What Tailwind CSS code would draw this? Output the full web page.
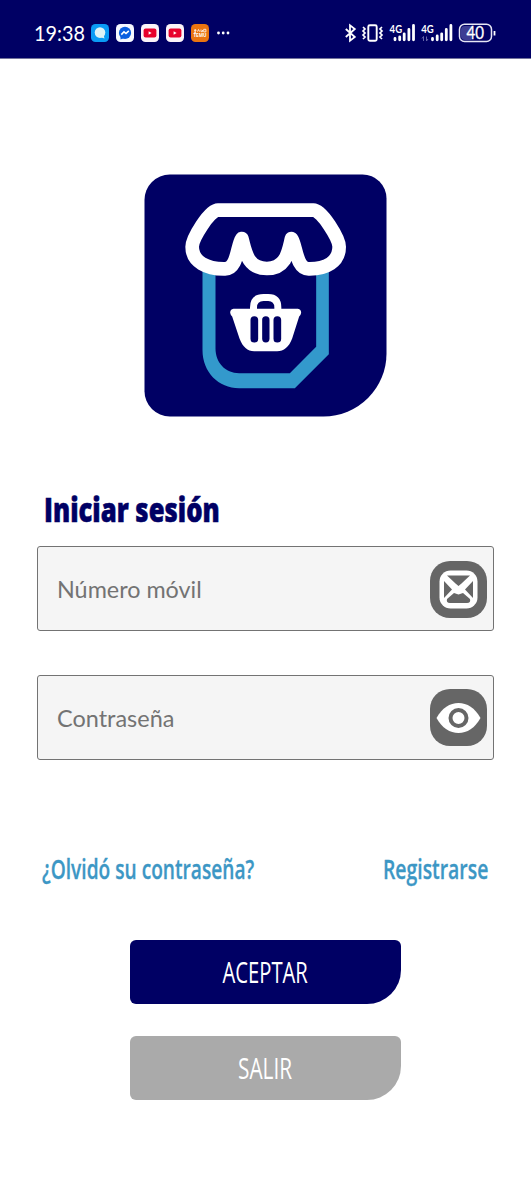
<!DOCTYPE html>
<html lang="es">
<head>
  <meta charset="UTF-8" />
  <meta name="viewport" content="width=device-width, initial-scale=1.0" />
  <title>Iniciar sesión</title>
  <script src="https://cdn.jsdelivr.net/npm/@tailwindcss/browser@4"></script>
</head>
<body class="min-h-[1200px] bg-white font-['Open_Sans',sans-serif] overflow-x-hidden">
  <!-- Status bar -->
  <header class="h-[58px] bg-[#000064] text-white flex items-center justify-between pl-[34px] pr-[35px] pt-2">
    <div class="flex items-center">
      <span class="w-[57px] font-['Lato',sans-serif] text-[22px] leading-none whitespace-nowrap"><span class="inline-block origin-left scale-x-[0.9]">19:38</span></span>
      <div class="flex items-center gap-[7px]">
        <svg class="w-[18px] h-[18px]" viewBox="0 0 18 18">
          <rect width="18" height="18" rx="4.5" fill="#0a9bf5" />
          <circle cx="9" cy="8.6" r="5.3" fill="#dff3f6" />
          <path d="M9 13l4.500 1.500-1-4z" fill="#dff3f6" />
        </svg>
        <svg class="w-[18px] h-[18px]" viewBox="0 0 18 18">
          <rect width="18" height="18" rx="4.5" fill="#f6f8ff" />
          <circle cx="9" cy="8.9" r="6.1" fill="#0b5fe0" />
          <path d="M4.5 12v3.4l3.5-1.5z" fill="#0b5fe0" />
          <path d="M5.3 10.6L8 7.8l2 1.7 2.8-2.6" fill="none" stroke="#fff" stroke-width="1.6" />
        </svg>
        <svg class="w-[18px] h-[18px]" viewBox="0 0 18 18">
          <rect width="18" height="18" rx="4.5" fill="#fbf3f8" />
          <rect x="2.6" y="4.5" width="12.8" height="9" rx="2" fill="#e8002c" />
          <path d="M7.6 7.2v3.6l3-1.8z" fill="#fff" />
        </svg>
        <svg class="w-[18px] h-[18px]" viewBox="0 0 18 18">
          <rect width="18" height="18" rx="4.5" fill="#fbf3f8" />
          <rect x="2.6" y="4.5" width="12.8" height="9" rx="2" fill="#e8002c" />
          <path d="M7.6 7.2v3.6l3-1.8z" fill="#fff" />
        </svg>
        <svg class="w-[18px] h-[18px]" viewBox="0 0 18 18">
          <rect width="18" height="18" rx="4.5" fill="#ea7410" />
          <path d="M3 6.3h2.5M4.2 5v3.5M6.5 7.7l1-2.2 1.2 2.2M10 5.5v2.2h1.5V6M12.7 5.3h2.2v2.6h-2.2zM3 8.3h2" fill="none" stroke="#fff" stroke-width=".8" />
          <text x="2.4" y="13.4" textLength="13.2" lengthAdjust="spacingAndGlyphs" font-size="5.2" font-weight="700" fill="#fff">TEMU</text>
        </svg>
        <svg class="w-[14px] h-[18px]" viewBox="0 0 14 18" fill="#fff">
          <circle cx="2.5" cy="9" r="1.4" /><circle cx="7.2" cy="9" r="1.4" /><circle cx="12" cy="9" r="1.4" />
        </svg>
      </div>
    </div>

    <!-- Bluetooth, vibration, two SIM signals, battery -->
    <svg class="w-[152px] h-[30px]" viewBox="344 18 152 30" fill="none" stroke="#fff">
      <path d="M345.800 29l9 8-4.800 3.700V25.300l4.800 3.700-9 8" stroke-width="1.800" />
      <rect x="368.300" y="25.200" width="8.400" height="15.600" rx="1.500" stroke-width="1.900" />
      <path d="M363 27l2 2-2 2 2 2-2 2 2 2-2 2M382 27l-2 2 2 2-2 2 2 2-2 2 2 2" stroke-width="1.700" />
      <g stroke-width="2.800" stroke-linecap="round">
        <path d="M395 38.500v1.300M399.700 37v2.800M404.200 33.800v6M408.900 29.500v10.300M413.500 25.500v14.300" />
        <path d="M432.500 38.500v1.300M437.200 36v3.800M441.700 33.800v6M446.300 29.500v10.300M450.900 25.500v14.300" />
      </g>
      <path d="M423.500 36.500v4.500M426.500 36.500v4.500M422 38.500l1.500-2M428 39l-1.500 2" stroke="#6666a8" stroke-width="1" />
      <rect x="459.500" y="24.200" width="32" height="17.300" rx="5" stroke-width="1.500" stroke="#e6e6f5" />
      <path d="M471.500 26H465q-4 0-4 4v6q0 4 4 4h6.500z" fill="#3d3d94" stroke="none" />
      <path d="M494.500 31v4.500" stroke-width="1.800" />
      <g fill="#fff" stroke="none" font-family="Lato, sans-serif">
        <text x="389.600" y="33.300" textLength="12.500" lengthAdjust="spacingAndGlyphs" font-size="12" font-weight="700">4G</text>
        <text x="421.300" y="33.300" textLength="12.500" lengthAdjust="spacingAndGlyphs" font-size="12" font-weight="700">4G</text>
        <text x="466.500" y="38.900" textLength="17.500" lengthAdjust="spacingAndGlyphs" font-size="16.500" font-weight="400" stroke="#fff" stroke-width=".3">40</text>
      </g>
    </svg>
  </header>

  <main class="flex flex-col border-t border-[#73739c] px-[37px]">
    <!-- Logo -->
    <svg class="mt-[115px] ml-[107px] w-[243px] h-[243px]" viewBox="26.500 26.500 729 729">
      <path d="M104 28H682A72 72 0 0 1 754 100V565A189 189 0 0 1 565 754H104A76 76 0 0 1 28 678V104A76 76 0 0 1 104 28Z" fill="#000064" />
      <path d="M202 305V555C202 620 250 669 312 669H479L581 567V305H543V545L464 624H312C270 624 241 592 241 550V305Z" fill="#3399cc" />
      <path d="M171 245C171 290 215 312 270 311C308 311 305 240 320 220C330 255 335 310 395 310C455 310 460 255 469 220C484 240 482 311 520 311C573 312 612 290 612 245C612 220 560 135 535 135H248C223 135 171 220 171 245Z" fill="none" stroke="#fff" stroke-width="41" stroke-linejoin="round" />
      <path d="M355 440V427Q355 397 385 397H399Q428 397 428 427V440" fill="none" stroke="#fff" stroke-width="21" />
      <path d="M295 431H488Q498 433 498 443Q497 450 492 454L471 520C461 546 446 558 426 558H357C337 558 323 546 313 520L291 454Q286 450 285 443Q285 433 295 431Z" fill="#fff" />
      <g fill="#000064">
        <rect x="346" y="453" width="23" height="79" rx="11.500" />
        <rect x="381" y="453" width="22" height="79" rx="11" />
        <rect x="415" y="453" width="23" height="79" rx="11.500" />
      </g>
    </svg>

    <h1 class="mt-[68px] ml-[7px] h-[48px] text-[34px] leading-[48px] font-extrabold text-[#000064] whitespace-nowrap [-webkit-text-stroke:0.6px_#000064]"><span class="inline-block origin-left scale-x-[0.755]">Iniciar sesión</span></h1>

    <form>
      <label class="mt-[13px] flex h-[85px] items-center justify-between rounded-[3px] border-[1.500px] border-[#737373] bg-[#f5f5f5] pl-[19px] pr-[6px]">
        <span class="pt-[2px] font-['Lato',sans-serif] text-[23px] text-[#737373] whitespace-nowrap"><span class="inline-block origin-left scale-x-[1.015]">Número móvil</span></span>
        <svg class="mt-px w-[57px] h-[57px]" viewBox="0 0 57 57">
          <rect width="57" height="57" rx="20" fill="#666" />
          <rect x="9.500" y="9.500" width="38" height="38" rx="11" fill="#fff" />
          <path d="M17 14.500H40L31.500 22.500 28.500 25 25.500 22.500zM14 20L22 28.500 14 37zM43 20L35 28.500 43 37zM24 32L28.500 33.500 33 32 40 38Q41 42 37 42H20Q16 42 17 38z" fill="#666" />
        </svg>
      </label>
      <label class="mt-[44px] flex h-[85px] items-center justify-between rounded-[3px] border-[1.500px] border-[#737373] bg-[#f5f5f5] pl-[19px] pr-[6px]">
        <span class="pt-px font-['Lato',sans-serif] text-[23px] text-[#737373] whitespace-nowrap"><span class="inline-block origin-left scale-x-[1.02]">Contraseña</span></span>
        <svg class="w-[57px] h-[57px]" viewBox="0 0 57 57">
          <rect width="57" height="57" rx="20" fill="#666" />
          <path d="M6.500 29C12 19 20 14 28.500 14S45 19 50.500 29C45 39 37 44 28.500 44S12 39 6.500 29Z" fill="#fff" />
          <circle cx="28.500" cy="29" r="8" fill="#fff" stroke="#666" stroke-width="4" />
        </svg>
      </label>
    </form>

    <div class="mt-[89px] flex h-[40px] justify-between pl-[5px] pr-[4px] text-[26.500px] leading-[40px] font-semibold text-[#3c97c5] [-webkit-text-stroke:0.3px_#3c97c5]">
      <a href="#" class="w-[214px] whitespace-nowrap"><span class="inline-block origin-left scale-x-[0.722]">¿Olvidó su contraseña?</span></a>
      <a href="#" class="w-[107px] whitespace-nowrap"><span class="inline-block origin-left scale-x-[0.731]">Registrarse</span></a>
    </div>

    <div class="mt-[51px] flex flex-col items-center gap-8 text-[28.500px] text-white">
      <button class="flex h-[64px] w-[271px] items-center justify-center rounded-[6px] rounded-br-[34px] bg-[#000064]"><span class="scale-x-[0.71]">ACEPTAR</span></button>
      <button class="flex h-[64px] w-[271px] items-center justify-center rounded-[6px] rounded-br-[34px] bg-[#aaa]"><span class="scale-x-[0.73]">SALIR</span></button>
    </div>
  </main>
</body>
</html>
